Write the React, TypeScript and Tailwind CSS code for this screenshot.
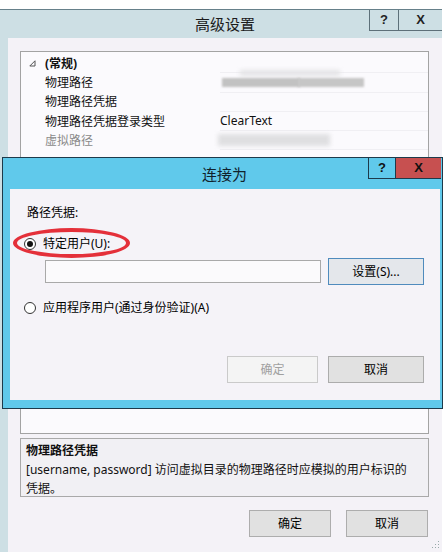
import React from "react";

function Radio({ checked }: { checked?: boolean }) {
  return (
    <div className="w-[12px] h-[12px] rounded-full border border-[#333] bg-white flex items-center justify-center">
      {checked && <div className="w-[6px] h-[6px] rounded-full bg-[#111]" />}
    </div>
  );
}

function Row({
  label,
  value,
  bold,
  gray,
  tri,
}: {
  label: string;
  value?: React.ReactNode;
  bold?: boolean;
  gray?: boolean;
  tri?: boolean;
}) {
  return (
    <div className="flex h-[19.3px] items-center">
      <div className="w-[24px] h-full flex items-center justify-end pr-[9px]">
        {tri && (
          <svg width="7" height="7" viewBox="0 0 7 7">
            <path d="M6 0.8 L6 6 L0.8 6 Z" fill="none" stroke="#555" strokeWidth="1" />
          </svg>
        )}
      </div>
      <div
        className={
          "w-[175px] h-full flex items-center " +
          (bold ? "font-bold text-[#111] " : "") +
          (gray ? "text-[#8a8a8a]" : "text-[#111]")
        }
      >
        {label}
      </div>
      <div className="flex-1 h-full flex items-center border-b border-[#f0eff3] text-[#111]">{value}</div>
    </div>
  );
}

export default function App() {
  return (
    <div className="relative w-[447px] h-[554px] bg-white overflow-hidden text-[12px] leading-[16px] text-black font-['Noto_Sans','Noto_Sans_CJK_SC',sans-serif]">
      {/* Back window */}
      <div className="mt-[9px] w-[442px] h-[543px] flex flex-col border-t border-[#66808a] bg-[#cddfe4]">
        <div className="relative h-[28px] shrink-0 flex items-center justify-center pl-[8px] text-[15px] text-[#1b1b1b] font-['Noto_Sans_CJK_SC',sans-serif]">
          高级设置
          <div className="absolute right-0 top-0 flex h-[21px]">
            <div className="w-[29px] border-l border-b border-[#5d7079] flex items-center justify-center font-bold text-[13px] text-[#222] font-['Liberation_Sans',sans-serif]">
              ?
            </div>
            <div className="w-[44px] border-l border-b border-[#5d7079] flex items-center justify-center font-bold text-[13px] text-[#222] font-['Liberation_Sans',sans-serif]">
              X
            </div>
          </div>
        </div>
        <div className="relative flex-1 ml-[8px] bg-[#f4f2f7] flex flex-col pl-[12px] pr-[13px] pt-[13px]">
          <div className="h-[383px] border border-[#a3a3a3] bg-[#fbfafd] pt-[2px]">
            <Row tri bold label="(常规)" />
            <Row
              label="物理路径"
              value={
                <div className="relative ml-[2px] w-[142px] h-[10px]">
                  <div className="absolute left-[18px] top-[-7px] w-[100px] h-[6px] bg-[#e4e4e6] blur-[2px]" />
                  <div className="absolute left-0 top-[1px] w-[78px] h-[9px] bg-[#c2c2c2] blur-[1px]" />
                  <div className="absolute left-[76px] top-[1px] w-[66px] h-[9px] bg-[#c6c6c6] blur-[1px]" />
                </div>
              }
            />
            <Row label="物理路径凭据" />
            <Row label="物理路径凭据登录类型" value="ClearText" />
            <Row
              gray
              label="虚拟路径"
              value={<div className="ml-[-2px] w-[112px] h-[12px] bg-[#dfdfe1] blur-[2px]" />}
            />
          </div>
          <div className="mt-[4px] h-[59px] border border-[#a9a9a9] bg-[#f1f0f4] px-[5px] pt-[2px] leading-[19px] text-[#111]">
            <div className="font-bold">物理路径凭据</div>
            <div>[username, password] 访问虚拟目录的物理路径时应模拟的用户标识的</div>
            <div>凭据。</div>
          </div>
          <div className="mt-[13px] flex justify-end gap-[15px] pr-[1px]">
            <div className="w-[82px] h-[27px] border border-[#adadad] bg-[#e1e1e1] flex items-center justify-center">确定</div>
            <div className="w-[82px] h-[27px] border border-[#adadad] bg-[#e1e1e1] flex items-center justify-center">取消</div>
          </div>
          <svg className="absolute right-[2px] bottom-[3px]" width="10" height="10" viewBox="0 0 10 10">
            <rect x="8" y="2" width="1" height="1" fill="#9aa" />
            <rect x="5" y="5" width="1" height="1" fill="#9aa" />
            <rect x="8" y="5" width="1" height="1" fill="#9aa" />
            <rect x="2" y="8" width="1" height="1" fill="#9aa" />
            <rect x="5" y="8" width="1" height="1" fill="#9aa" />
            <rect x="8" y="8" width="1" height="1" fill="#9aa" />
          </svg>
        </div>
      </div>

      {/* Front dialog */}
      <div className="absolute left-[2px] top-[157px] w-[441px] h-[252px] border border-[#1d3a4b] bg-[#60c9eb] flex flex-col">
        <div className="relative h-[31px] shrink-0 flex items-center justify-center pl-[4px] text-[15px] text-[#10222c] font-['Noto_Sans_CJK_SC',sans-serif]">
          连接为
          <div className="absolute right-[1px] top-0 flex h-[21px]">
            <div className="w-[28px] border-l border-b border-r border-[#1d3a4b] flex items-center justify-center font-bold text-[13px] text-[#111] font-['Liberation_Sans',sans-serif]">
              ?
            </div>
            <div className="w-[45px] bg-[#c75050] border-b border-[#1d3a4b] flex items-center justify-center font-bold text-[13px] text-[#111] font-['Liberation_Sans',sans-serif]">
              X
            </div>
          </div>
        </div>
        <div className="flex-1 ml-[7px] mr-[2px] mb-[8px] bg-[#f5f3f8] flex flex-col pr-[16px]">
          <div className="mt-[16px] ml-[17px] h-[16px]">路径凭据:</div>
          <div className="mt-[15px] ml-[14px] h-[16px] flex items-center gap-[7px]">
            <Radio checked />
            <span>特定用户(U):</span>
          </div>
          <div className="mt-[6px] h-[27px] flex items-center">
            <div className="ml-[35px] w-[276px] h-[23px] border border-[#a9a9a9] bg-[#fbfafc]" />
            <div className="ml-auto w-[96px] h-[27px] border border-[#4f8bbd] bg-[#e4e7eb] flex items-center justify-center">
              设置(S)...
            </div>
          </div>
          <div className="mt-[15px] ml-[14px] h-[16px] flex items-center gap-[7px]">
            <Radio />
            <span>应用程序用户(通过身份验证)(A)</span>
          </div>
          <div className="mt-[40px] flex justify-end gap-[10px]">
            <div className="w-[91px] h-[27px] border border-[#cacaca] bg-[#f4f4f4] text-[#a0a0a0] flex items-center justify-center">确定</div>
            <div className="w-[96px] h-[27px] border border-[#acacac] bg-[#e1e1e1] flex items-center justify-center">取消</div>
          </div>
        </div>
      </div>

      {/* Red annotation ellipse */}
      <div className="absolute left-[13px] top-[228px] w-[117px] h-[30px] rounded-[50%] border-[4px] border-[#e4303a]" />
    </div>
  );
}
